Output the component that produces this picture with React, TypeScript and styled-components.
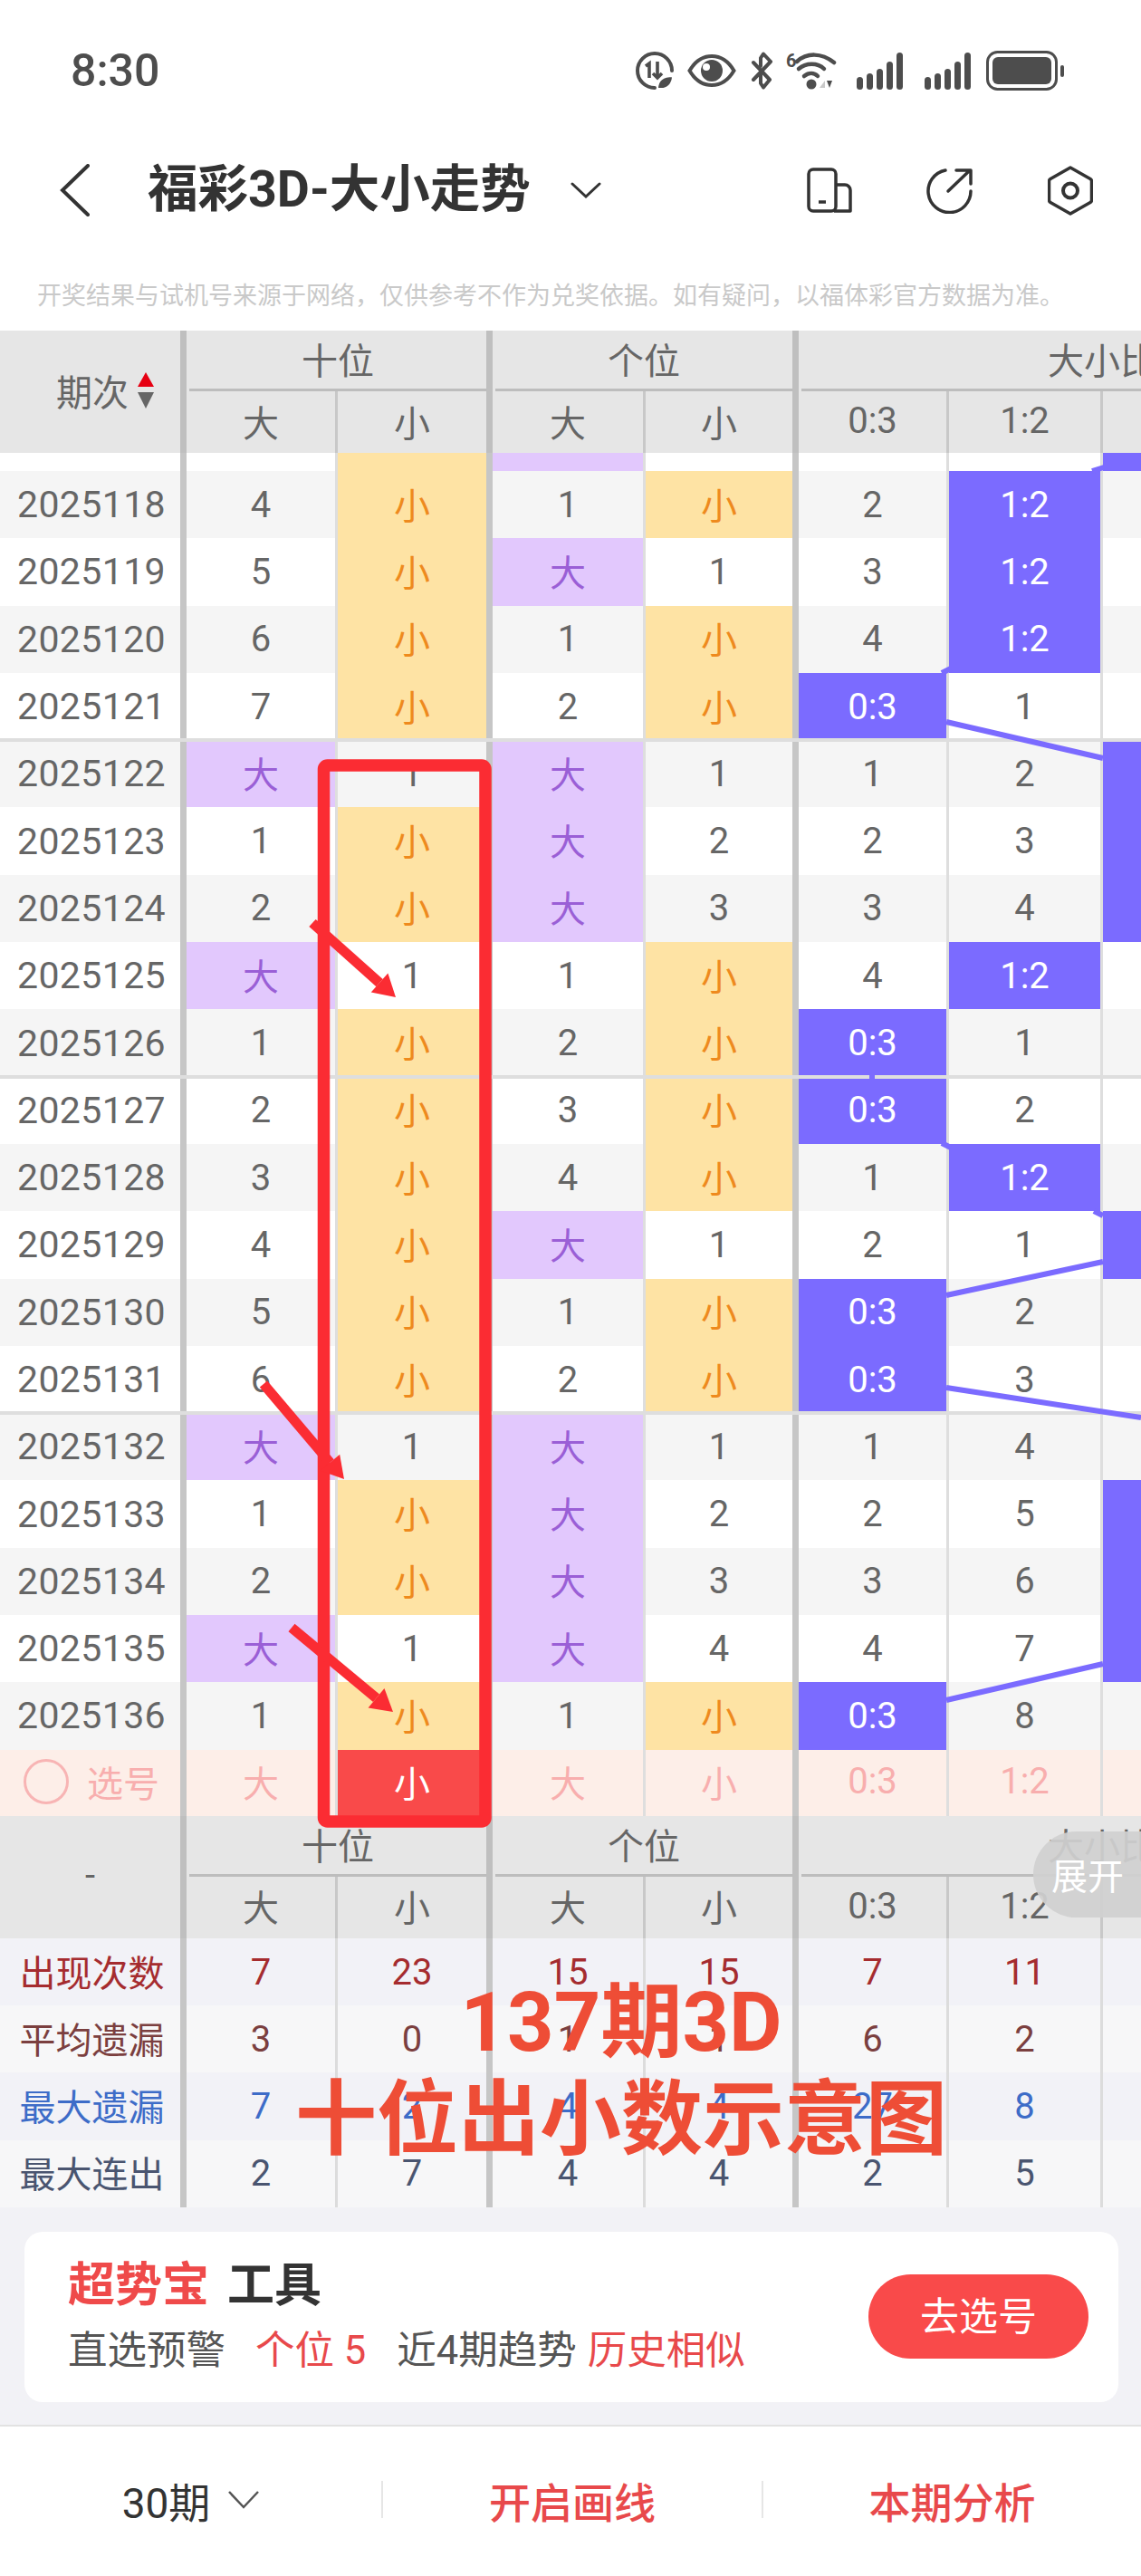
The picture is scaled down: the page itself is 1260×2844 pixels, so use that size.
import React from "react";
import styled, { createGlobalStyle } from "styled-components";

const FONT = `Roboto, "Noto Sans CJK SC", sans-serif`;
const COLUMNS = "199px 171px 167px 173px 165px 170px 170px 167px 167px";
const RED = "#ef4a4a";
const INK = "#4d4d4d";

const GlobalStyle = createGlobalStyle`
  html, body {
    margin: 0;
    padding: 0;
    background: #fff;
    font-family: ${FONT};
  }
  * {
    box-sizing: border-box;
  }
`;

const Page = styled.div`
  position: relative;
  width: 1260px;
  height: 2844px;
  overflow: hidden;
  background: #fff;
`;

const StatusBar = styled.div`
  display: flex;
  align-items: center;
  justify-content: space-between;
  height: 156px;
  padding: 0 85px 0 78px;
`;
const Clock = styled.span`
  font-size: 50px;
  font-weight: 500;
  color: ${INK};
`;
const StatusIcons = styled.div`
  display: flex;
  align-items: center;
`;
const StatusIcon = styled.svg<{ $gap?: number }>`
  display: block;
  margin-left: ${p => p.$gap || 0}px;
`;

const NavBar = styled.div`
  display: flex;
  align-items: center;
  height: 108px;
  padding: 0 53px 0 66px;
`;
const NavTitle = styled.h1`
  margin: 0 0 0 64px;
  font-size: 55.5px;
  font-weight: 700;
  line-height: 60px;
  color: #333;
`;
const NavActions = styled.div`
  display: flex;
  align-items: center;
  gap: 82px;
  margin-left: auto;
`;
const TitleCaret = styled.svg`
  margin-left: 44px;
`;

const Notice = styled.p`
  height: 101px;
  margin: 0;
  padding: 46px 0 0 41px;
  font-size: 27px;
  line-height: 34px;
  white-space: nowrap;
  color: #c9c9c9;
`;

const Table = styled.div`
  width: 1260px;
  overflow: hidden;
`;
const HeadGrid = styled.div`
  display: grid;
  grid-template-columns: ${COLUMNS};
  grid-template-rows: 67px 68px;
  height: 135px;
  background: #e6e6e6;
  font-size: 40px;
  color: #666;
`;
const HeadCorner = styled.div<{ $pad: number }>`
  grid-row: 1 / span 2;
  display: flex;
  align-items: center;
  justify-content: center;
  gap: 9px;
  padding: 0 0 3px ${p => p.$pad}px;
`;
const HeadGroup = styled.div<{ $span: number }>`
  grid-column: span ${p => p.$span};
  border-left: 7px solid #bfbfbf;
  & > div {
    display: flex;
    align-items: center;
    justify-content: center;
    height: 67px;
    margin-left: 3px;
    padding-bottom: 2px;
    border-bottom: 3px solid #bdbdbd;
  }
`;
const HeadCell = styled.div<{ $sep: string }>`
  display: flex;
  align-items: center;
  justify-content: center;
  padding-bottom: 3px;
  border-left: ${p => (p.$sep === "thick" ? "7px solid #bfbfbf" : "3px solid #c8c8c8")};
`;

const Row = styled.div<{ $band?: boolean; $height?: number; $groupStart?: boolean }>`
  position: relative;
  display: grid;
  grid-template-columns: ${COLUMNS};
  height: ${p => p.$height || 74.3}px;
  background: ${p => (p.$band ? "#f5f5f5" : "#fff")};
  ${p =>
    p.$groupStart &&
    `&::before {
      content: "";
      position: absolute;
      top: -2px;
      left: 0;
      right: 0;
      height: 4px;
      background: #dedede;
    }`}
`;
const PeriodLabel = styled.div`
  display: flex;
  align-items: center;
  justify-content: center;
  padding-left: 3px;
  font-size: 41px;
  letter-spacing: 0.4px;
  color: #666;
`;

const toneStyles: Record<string, string> = {
  plain: "color: #666;",
  big: "background: #e2c8fd; color: #9a5fd6; padding-bottom: 3px;",
  small: "background: #fee3a4; color: #ee8a1e; padding-bottom: 3px;",
  hit: "background: #7b6bff; color: #fff;",
  pick: "color: #f8aeae; padding-bottom: 3px;",
  active: "background: #f94a4a; color: #fff; padding-bottom: 3px;"
};
const Cell = styled.div<{ $sep: string; $tone: string }>`
  display: flex;
  align-items: center;
  justify-content: center;
  font-size: 40px;
  border-left: ${p => (p.$sep === "thick" ? "7px solid #c6c6c6" : "3px solid #dedede")};
  ${p => toneStyles[p.$tone]}
`;

const PickRow = styled(Row)`
  background: #fdeee8;
`;
const PickLabel = styled.div`
  display: flex;
  align-items: center;
  gap: 20px;
  padding: 0 0 3px 26px;
  font-size: 40px;
  color: #f8aeae;
`;
const PickCircle = styled.span`
  width: 50px;
  height: 50px;
  border: 3px solid #f8b4b4;
  border-radius: 50%;
`;

const FootHead = styled.div`
  position: relative;
`;
const ExpandTab = styled.div`
  position: absolute;
  top: 17px;
  right: 0;
  display: flex;
  align-items: center;
  width: 119px;
  height: 95px;
  padding-left: 20px;
  border-radius: 48px 0 0 48px;
  background: rgba(208, 208, 208, 0.92);
  font-size: 40px;
  color: #fff;
`;

const Stats = styled.div`
  position: relative;
`;
const StatRow = styled.div<{ $band: boolean; $color: string }>`
  display: grid;
  grid-template-columns: ${COLUMNS};
  height: 74.25px;
  background: ${p => (p.$band ? "#f2f2f7" : "#f7f7f8")};
  color: ${p => p.$color};
`;
const StatLabel = styled.div`
  display: flex;
  align-items: center;
  justify-content: center;
  padding: 0 0 3px 4px;
  font-size: 40px;
`;
const StatCell = styled.div<{ $sep: string }>`
  display: flex;
  align-items: center;
  justify-content: center;
  font-size: 40px;
  border-left: ${p => (p.$sep === "thick" ? "7px solid #c6c6c6" : "3px solid #dcdcdc")};
`;
const Caption = styled.div`
  position: absolute;
  top: 40px;
  left: 326px;
  width: 720px;
  font-size: 90px;
  font-weight: 700;
  line-height: 107px;
  text-align: center;
  color: #ee4d36;
`;

const ToolPanel = styled.div`
  height: 240px;
  padding: 27px 25px 0 27px;
  background: #f2f2f6;
`;
const ToolCard = styled.div`
  display: flex;
  align-items: center;
  justify-content: space-between;
  height: 188px;
  padding: 0 33px 0 48px;
  border-radius: 20px;
  background: #fff;
`;
const ToolText = styled.div`
  display: flex;
  flex-direction: column;
  gap: 12px;
  padding-top: 5px;
`;
const ToolTitle = styled.div`
  font-size: 52px;
  font-weight: 700;
  line-height: 60px;
  color: #333;
  span {
    margin-right: 20px;
    color: ${RED};
  }
`;
const ToolLine = styled.div`
  display: flex;
  font-size: 43.5px;
  line-height: 60px;
  color: #555;
`;
const ToolHint = styled.span<{ $gap: number; $red?: boolean }>`
  margin-left: ${p => p.$gap}px;
  color: ${p => (p.$red ? "#e8494b" : "#555")};
`;
const PickButton = styled.div`
  display: flex;
  align-items: center;
  justify-content: center;
  width: 243px;
  height: 93px;
  padding-bottom: 7px;
  border-radius: 47px;
  background: #f94a4a;
  font-size: 43px;
  color: #fff;
`;

const BottomBar = styled.div`
  display: grid;
  grid-template-columns: 421px 2px 418px 2px 1fr;
  align-items: center;
  height: 167px;
  padding-bottom: 3px;
  border-top: 2px solid #e2e2e2;
  background: #fff;
`;
const BarItem = styled.div<{ $red?: boolean }>`
  display: flex;
  align-items: center;
  justify-content: center;
  gap: 20px;
  font-size: 46px;
  font-weight: ${p => (p.$red ? 500 : 400)};
  color: ${p => (p.$red ? "#e8494b" : "#333")};
`;
const BarDivider = styled.div`
  height: 41px;
  background: #e6e6e6;
`;

const Overlay = styled.svg`
  position: absolute;
  top: 0;
  left: 0;
  pointer-events: none;
`;

type RowData = [string, string, string, string, string, string, string, boolean];

const ROWS: RowData[] = [
  ["2025118", "4", "小", "1", "小", "2", "1:2", false],
  ["2025119", "5", "小", "大", "1", "3", "1:2", false],
  ["2025120", "6", "小", "1", "小", "4", "1:2", false],
  ["2025121", "7", "小", "2", "小", "0:3", "1", false],
  ["2025122", "大", "1", "大", "1", "1", "2", true],
  ["2025123", "1", "小", "大", "2", "2", "3", true],
  ["2025124", "2", "小", "大", "3", "3", "4", true],
  ["2025125", "大", "1", "1", "小", "4", "1:2", false],
  ["2025126", "1", "小", "2", "小", "0:3", "1", false],
  ["2025127", "2", "小", "3", "小", "0:3", "2", false],
  ["2025128", "3", "小", "4", "小", "1", "1:2", false],
  ["2025129", "4", "小", "大", "1", "2", "1", true],
  ["2025130", "5", "小", "1", "小", "0:3", "2", false],
  ["2025131", "6", "小", "2", "小", "0:3", "3", false],
  ["2025132", "大", "1", "大", "1", "1", "4", false],
  ["2025133", "1", "小", "大", "2", "2", "5", true],
  ["2025134", "2", "小", "大", "3", "3", "6", true],
  ["2025135", "大", "1", "大", "4", "4", "7", true],
  ["2025136", "1", "小", "1", "小", "0:3", "8", false]
];

const STATS = [
  { label: "出现次数", color: "#a52c2f", values: ["7", "23", "15", "15", "7", "11"] },
  { label: "平均遗漏", color: "#7b3f3f", values: ["3", "0", "1", "1", "6", "2"] },
  { label: "最大遗漏", color: "#3d6cc8", values: ["7", "2", "4", "4", "27", "8"] },
  { label: "最大连出", color: "#4a5570", values: ["2", "7", "4", "4", "2", "5"] }
];

const SEPS = ["thick", "thin", "thick", "thin", "thick", "thin", "thin", "thin"];
const SUB_HEADS = ["大", "小", "大", "小", "0:3", "1:2", "", ""];

const toneOf = (value: string) => {
  if (value === "大") return "big";
  if (value === "小") return "small";
  if (value.includes(":")) return "hit";
  return "plain";
};

const Head = () => (
  <>
    <HeadGroup $span={2}>
      <div>十位</div>
    </HeadGroup>
    <HeadGroup $span={2}>
      <div>个位</div>
    </HeadGroup>
    <HeadGroup $span={4}>
      <div>大小比</div>
    </HeadGroup>
    {SUB_HEADS.map((text, i) => (
      <HeadCell key={i} $sep={SEPS[i]}>
        {text}
      </HeadCell>
    ))}
  </>
);

const SortIcon = () => (
  <svg width="20" height="40" viewBox="0 0 20 40">
    <polygon points="10,0 19,16 1,16" fill="#e60012" />
    <polygon points="1,22 19,22 10,40" fill="#666" />
  </svg>
);

const DataIcon = () => (
  <StatusIcon width="42" height="42" viewBox="0 0 42 42" fill="none" stroke={INK} strokeWidth="4">
    <path d="M21 40A19 19 0 1 1 40 21" strokeLinecap="round" />
    <path d="M11 16l4-3v16M24 11v17M19 24l5 5 5-5" strokeWidth="3.6" />
    <path d="M24 41c0-10 7-14 17-14 0 9-6 14-13 14z" fill={INK} stroke="#fff" strokeWidth="2" />
  </StatusIcon>
);

const EyeIcon = () => (
  <StatusIcon $gap={15} width="54" height="38" viewBox="0 0 54 38" fill="none">
    <path d="M2.5 19C9 8 18 3 27 3s18 5 24.500 16C45 30 36 35 27 35S9 30 2.500 19z" stroke={INK} strokeWidth="4" />
    <circle cx="27" cy="19" r="12" fill={INK} />
    <circle cx="21" cy="15" r="4" fill="#fff" />
  </StatusIcon>
);

const BluetoothIcon = () => (
  <StatusIcon $gap={16} width="25" height="42" viewBox="0 0 25 42" fill="none" stroke={INK} strokeWidth="4" strokeLinejoin="round" strokeLinecap="round">
    <path d="M3 12L21 31 14 39.500 11 35V26" />
    <path d="M22 11L14 2.500 11 7V16M22 11L3 31" />
  </StatusIcon>
);

const WifiIcon = () => (
  <StatusIcon $gap={13} width="57" height="44" viewBox="0 0 57 44" fill="none">
    <text x="1" y="18" fontFamily={FONT} fontSize="20" fontWeight="700" fill={INK}>
      6
    </text>
    <path d="M13 12C24 2 40 2 54 13" stroke={INK} strokeWidth="4.500" strokeLinecap="round" />
    <path d="M15 20c8-7 21-7 28 0" stroke={INK} strokeWidth="4.500" strokeLinecap="round" />
    <path d="M21 28c5-4 11-4 15 0" stroke={INK} strokeWidth="4.500" strokeLinecap="round" />
    <circle cx="29" cy="37" r="5.500" fill={INK} />
    <polygon points="38,41 44,33 44,41" fill="#c9c9c9" />
    <polygon points="46,33 52,33 49,41" fill={INK} />
  </StatusIcon>
);

const SignalIcon = ({ gap }: { gap: number }) => (
  <StatusIcon $gap={gap} width="51" height="42" viewBox="0 0 51 42" fill={INK}>
    <rect x="0" y="28" width="7" height="14" rx="3.500" />
    <rect x="11" y="24" width="7" height="18" rx="3.500" />
    <rect x="22" y="19" width="7" height="23" rx="3.500" />
    <rect x="33" y="11" width="7" height="31" rx="3.500" />
    <rect x="44" y="1" width="7" height="41" rx="3.500" />
  </StatusIcon>
);

const BatteryIcon = () => (
  <StatusIcon $gap={17} width="86" height="44" viewBox="0 0 86 44" fill="none">
    <rect x="1.500" y="1.500" width="76" height="41" rx="11" stroke={INK} strokeWidth="3" />
    <rect x="7" y="7" width="65" height="30" rx="6" fill={INK} />
    <rect x="82" y="16" width="4" height="13" rx="2" fill={INK} />
  </StatusIcon>
);

const PhoneIcon = () => (
  <svg width="50" height="50" viewBox="0 0 50 50" fill="none" stroke="#333" strokeWidth="3.500" strokeLinejoin="round">
    <rect x="2" y="2" width="30" height="46" rx="5" />
    <path d="M32 19h10a6 6 0 0 1 6 6v23H30" />
    <path d="M13 38h8" />
  </svg>
);

const ShareIcon = () => (
  <svg width="52" height="51" viewBox="0 0 52 51" fill="none" stroke="#333" strokeWidth="3.500" strokeLinecap="round" strokeLinejoin="round">
    <path d="M21 3A23.500 23.500 0 1 0 49 26" />
    <path d="M24 26L48 3M33 3h16v15" />
  </svg>
);

const HexIcon = () => (
  <svg width="50" height="55" viewBox="0 0 50 55" fill="none" stroke="#333" strokeWidth="3.500" strokeLinejoin="round">
    <path d="M25 2L47 14.500a3 3 0 0 1 1.500 2.500V38a3 3 0 0 1-1.500 2.500L25 53 3 40.500A3 3 0 0 1 1.500 38V17A3 3 0 0 1 3 14.500z" />
    <circle cx="25" cy="27.500" r="8" strokeWidth="4" />
  </svg>
);

// lines drawn over the grid, in page coordinates
const LINKS = [
  [1206, 520, 1219, 516],
  [1040, 743, 1050, 738],
  [963, 1186, 963, 1192],
  [1040, 1262, 1050, 1267],
  [1208, 1337, 1218, 1342],
  [1045, 797, 1218, 837],
  [1045, 1430, 1218, 1393],
  [1045, 1532, 1260, 1565],
  [1045, 1877, 1218, 1837]
];

const ARROWS = [
  [345, 1019, 437, 1101],
  [291, 1528, 380, 1633],
  [322, 1797, 434, 1890]
];

const Arrow = ({ from }: { from: number[] }) => {
  const [x1, y1, x2, y2] = from;
  const len = Math.hypot(x2 - x1, y2 - y1);
  const ux = (x2 - x1) / len;
  const uy = (y2 - y1) / len;
  const bx = x2 - ux * 24;
  const by = y2 - uy * 24;
  const points = `${x2},${y2} ${bx - uy * 14},${by + ux * 14} ${bx + uy * 14},${by - ux * 14}`;
  return (
    <>
      <line x1={x1} y1={y1} x2={bx} y2={by} stroke="#fb2c33" strokeWidth="11" />
      <polygon points={points} fill="#fb2c33" />
    </>
  );
};

export default function App() {
  return (
    <Page>
      <GlobalStyle />
      <StatusBar>
        <Clock>8:30</Clock>
        <StatusIcons>
          <DataIcon />
          <EyeIcon />
          <BluetoothIcon />
          <WifiIcon />
          <SignalIcon gap={22} />
          <SignalIcon gap={24} />
          <BatteryIcon />
        </StatusIcons>
      </StatusBar>

      <NavBar>
        <svg width="33" height="58" viewBox="0 0 33 58" fill="none" stroke="#333" strokeWidth="4" strokeLinecap="round">
          <path d="M31 2L3 29l28 27" />
        </svg>
        <NavTitle>福彩3D-大小走势</NavTitle>
        <TitleCaret width="34" height="18" viewBox="0 0 34 18" fill="none" stroke="#333" strokeWidth="3" strokeLinecap="round">
          <path d="M2 2l15 14L32 2" />
        </TitleCaret>
        <NavActions>
          <PhoneIcon />
          <ShareIcon />
          <HexIcon />
        </NavActions>
      </NavBar>

      <Notice>开奖结果与试机号来源于网络，仅供参考不作为兑奖依据。如有疑问，以福体彩官方数据为准。</Notice>

      <Table>
        <HeadGrid>
          <HeadCorner $pad={34}>
            期次
            <SortIcon />
          </HeadCorner>
          <Head />
        </HeadGrid>

        <Row $height={20}>
          <div />
          <Cell $sep="thick" $tone="plain" />
          <Cell $sep="thin" $tone="small" />
          <Cell $sep="thick" $tone="big" />
          <Cell $sep="thin" $tone="plain" />
          <Cell $sep="thick" $tone="plain" />
          <Cell $sep="thin" $tone="plain" />
          <Cell $sep="thin" $tone="hit" />
        </Row>

        {ROWS.map((row, index) => {
          const values = row.slice(1, 7) as string[];
          return (
            <Row key={row[0]} $band={index % 2 === 0} $groupStart={(index + 1) % 5 === 0}>
              <PeriodLabel>{row[0]}</PeriodLabel>
              {values.map((value, i) => (
                <Cell key={i} $sep={SEPS[i]} $tone={toneOf(value)}>
                  {value}
                </Cell>
              ))}
              <Cell $sep="thin" $tone={row[7] ? "hit" : "plain"} />
            </Row>
          );
        })}

        <PickRow $height={73.3}>
          <PickLabel>
            <PickCircle />
            选号
          </PickLabel>
          {SUB_HEADS.slice(0, 6).map((text, i) => (
            <Cell key={i} $sep={SEPS[i]} $tone={i === 1 ? "active" : "pick"}>
              {text}
            </Cell>
          ))}
          <Cell $sep="thin" $tone="pick" />
        </PickRow>

        <FootHead>
          <HeadGrid>
            <HeadCorner $pad={0}>-</HeadCorner>
            <Head />
          </HeadGrid>
          <ExpandTab>展开</ExpandTab>
        </FootHead>

        <Stats>
          {STATS.map((stat, index) => (
            <StatRow key={stat.label} $band={index % 2 === 0} $color={stat.color}>
              <StatLabel>{stat.label}</StatLabel>
              {stat.values.map((value, i) => (
                <StatCell key={i} $sep={SEPS[i]}>
                  {value}
                </StatCell>
              ))}
              <StatCell $sep="thin" />
            </StatRow>
          ))}
          <Caption>
            137期3D
            <br />
            十位出小数示意图
          </Caption>
        </Stats>
      </Table>

      <ToolPanel>
        <ToolCard>
          <ToolText>
            <ToolTitle>
              <span>超势宝</span>工具
            </ToolTitle>
            <ToolLine>
              直选预警
              <ToolHint $gap={33} $red>
                个位 5
              </ToolHint>
              <ToolHint $gap={34}>近4期趋势</ToolHint>
              <ToolHint $gap={12} $red>
                历史相似
              </ToolHint>
            </ToolLine>
          </ToolText>
          <PickButton>去选号</PickButton>
        </ToolCard>
      </ToolPanel>

      <BottomBar>
        <BarItem>
          30期
          <svg width="34" height="20" viewBox="0 0 34 20" fill="none" stroke="#555" strokeWidth="2.500">
            <path d="M1 1l16 17L33 1" />
          </svg>
        </BarItem>
        <BarDivider />
        <BarItem $red>开启画线</BarItem>
        <BarDivider />
        <BarItem $red>本期分析</BarItem>
      </BottomBar>

      <Overlay width="1260" height="2844" viewBox="0 0 1260 2844" fill="none">
        {LINKS.map((link, i) => (
          <line key={i} x1={link[0]} y1={link[1]} x2={link[2]} y2={link[3]} stroke="#7b6bff" strokeWidth="6" />
        ))}
        <rect x="357.500" y="845" width="178.500" height="1166" rx="4" stroke="#fb2c33" strokeWidth="13.500" />
        {ARROWS.map((arrow, i) => (
          <Arrow key={i} from={arrow} />
        ))}
      </Overlay>
    </Page>
  );
}
